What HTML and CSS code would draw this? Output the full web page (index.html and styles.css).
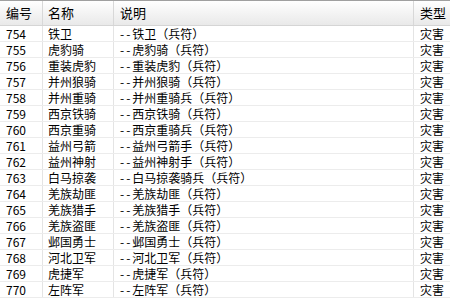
FILE: index.html
```html
<!DOCTYPE html>
<html lang="zh-CN">
<head>
<meta charset="utf-8">
<link rel="stylesheet" href="styles.css">
</head>
<body>
<div class="table">
  <div class="row head">
    <div class="cell">编号</div><div class="cell">名称</div><div class="cell">说明</div><div class="cell">类型</div>
  </div>
  <div class="row"><div class="cell">754</div><div class="cell">铁卫</div><div class="cell"><span class="dash">--</span>铁卫（兵符）</div><div class="cell">灾害</div></div>
  <div class="row"><div class="cell">755</div><div class="cell">虎豹骑</div><div class="cell"><span class="dash">--</span>虎豹骑（兵符）</div><div class="cell">灾害</div></div>
  <div class="row"><div class="cell">756</div><div class="cell">重装虎豹</div><div class="cell"><span class="dash">--</span>重装虎豹（兵符）</div><div class="cell">灾害</div></div>
  <div class="row"><div class="cell">757</div><div class="cell">并州狼骑</div><div class="cell"><span class="dash">--</span>并州狼骑（兵符）</div><div class="cell">灾害</div></div>
  <div class="row"><div class="cell">758</div><div class="cell">并州重骑</div><div class="cell"><span class="dash">--</span>并州重骑兵（兵符）</div><div class="cell">灾害</div></div>
  <div class="row"><div class="cell">759</div><div class="cell">西京铁骑</div><div class="cell"><span class="dash">--</span>西京铁骑（兵符）</div><div class="cell">灾害</div></div>
  <div class="row"><div class="cell">760</div><div class="cell">西京重骑</div><div class="cell"><span class="dash">--</span>西京重骑兵（兵符）</div><div class="cell">灾害</div></div>
  <div class="row"><div class="cell">761</div><div class="cell">益州弓箭</div><div class="cell"><span class="dash">--</span>益州弓箭手（兵符）</div><div class="cell">灾害</div></div>
  <div class="row"><div class="cell">762</div><div class="cell">益州神射</div><div class="cell"><span class="dash">--</span>益州神射手（兵符）</div><div class="cell">灾害</div></div>
  <div class="row"><div class="cell">763</div><div class="cell">白马掠袭</div><div class="cell"><span class="dash">--</span>白马掠袭骑兵（兵符）</div><div class="cell">灾害</div></div>
  <div class="row"><div class="cell">764</div><div class="cell">羌族劫匪</div><div class="cell"><span class="dash">--</span>羌族劫匪（兵符）</div><div class="cell">灾害</div></div>
  <div class="row"><div class="cell">765</div><div class="cell">羌族猎手</div><div class="cell"><span class="dash">--</span>羌族猎手（兵符）</div><div class="cell">灾害</div></div>
  <div class="row"><div class="cell">766</div><div class="cell">羌族盗匪</div><div class="cell"><span class="dash">--</span>羌族盗匪（兵符）</div><div class="cell">灾害</div></div>
  <div class="row"><div class="cell">767</div><div class="cell">邺国勇士</div><div class="cell"><span class="dash">--</span>邺国勇士（兵符）</div><div class="cell">灾害</div></div>
  <div class="row"><div class="cell">768</div><div class="cell">河北卫军</div><div class="cell"><span class="dash">--</span>河北卫军（兵符）</div><div class="cell">灾害</div></div>
  <div class="row"><div class="cell">769</div><div class="cell">虎捷军</div><div class="cell"><span class="dash">--</span>虎捷军（兵符）</div><div class="cell">灾害</div></div>
  <div class="row"><div class="cell">770</div><div class="cell">左阵军</div><div class="cell"><span class="dash">--</span>左阵军（兵符）</div><div class="cell">灾害</div></div>
</div>
</body>
</html>
```
FILE: styles.css
```css
html, body {
  margin: 0;
  padding: 0;
  background: #fff;
  overflow: hidden;
}
.table {
  width: 450px;
  font-family: "Noto Sans CJK SC", "Liberation Sans", sans-serif;
  font-size: 12px;
  color: #000;
}
.row {
  display: grid;
  grid-template-columns: 43px 71px 300px 1fr;
  height: 16px;
  box-sizing: border-box;
  border-bottom: 1px solid #ececec;
}
.cell {
  border-right: 1px solid #e4e4e4;
  padding-left: 5px;
  line-height: 15px;
  white-space: nowrap;
  overflow: hidden;
}
.cell:first-child { padding-left: 6px; }
.cell:nth-child(3) { padding-left: 6px; }
.cell:last-child { border-right: none; padding-left: 6px; }
.row.head {
  height: 26px;
  border-top: 1px solid #a0a0a0;
  border-bottom: 1px solid #d5d5d5;
  background: linear-gradient(#ffffff, #f6f6f6 40%, #e9e9e9);
}
.row.head .cell {
  line-height: 24px;
  font-size: 13px;
  border-right-color: #d8d8d8;
}
.dash {
  letter-spacing: 2px;
}
```
